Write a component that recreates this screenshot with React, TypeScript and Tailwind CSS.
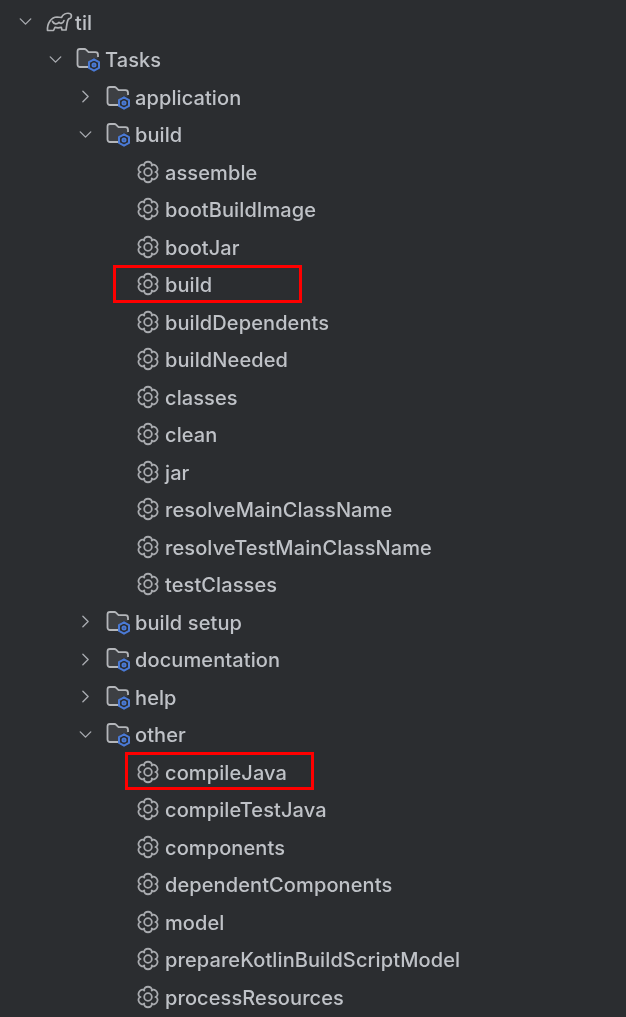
import { ChevronDown, ChevronRight } from 'lucide-react'

type Row = {
  label: string
  depth: 0 | 1 | 2 | 3
  kind: 'project' | 'folder' | 'task'
  open?: boolean
  marker?: 'build' | 'compile'
}

const rows: Row[] = [
  { label: 'til', depth: 0, kind: 'project', open: true },
  { label: 'Tasks', depth: 1, kind: 'folder', open: true },
  { label: 'application', depth: 2, kind: 'folder' },
  { label: 'build', depth: 2, kind: 'folder', open: true },
  { label: 'assemble', depth: 3, kind: 'task' },
  { label: 'bootBuildImage', depth: 3, kind: 'task' },
  { label: 'bootJar', depth: 3, kind: 'task' },
  { label: 'build', depth: 3, kind: 'task', marker: 'build' },
  { label: 'buildDependents', depth: 3, kind: 'task' },
  { label: 'buildNeeded', depth: 3, kind: 'task' },
  { label: 'classes', depth: 3, kind: 'task' },
  { label: 'clean', depth: 3, kind: 'task' },
  { label: 'jar', depth: 3, kind: 'task' },
  { label: 'resolveMainClassName', depth: 3, kind: 'task' },
  { label: 'resolveTestMainClassName', depth: 3, kind: 'task' },
  { label: 'testClasses', depth: 3, kind: 'task' },
  { label: 'build setup', depth: 2, kind: 'folder' },
  { label: 'documentation', depth: 2, kind: 'folder' },
  { label: 'help', depth: 2, kind: 'folder' },
  { label: 'other', depth: 2, kind: 'folder', open: true },
  { label: 'compileJava', depth: 3, kind: 'task', marker: 'compile' },
  { label: 'compileTestJava', depth: 3, kind: 'task' },
  { label: 'components', depth: 3, kind: 'task' },
  { label: 'dependentComponents', depth: 3, kind: 'task' },
  { label: 'model', depth: 3, kind: 'task' },
  { label: 'prepareKotlinBuildScriptModel', depth: 3, kind: 'task' },
  { label: 'processResources', depth: 3, kind: 'task' },
]

const indent = ['pl-[14px]', 'pl-[44px]', 'pl-[74px]', 'pl-[104px]']

// six rounded lobes around the centre, in a 24 box
function gearPath(tip: number, valley: number) {
  const pt = (deg: number, r: number) => {
    const a = (deg * Math.PI) / 180
    return `${(12 + r * Math.cos(a)).toFixed(2)} ${(12 + r * Math.sin(a)).toFixed(2)}`
  }
  let d = `M${pt(-120, valley)}`
  for (let i = 0; i < 6; i++) {
    const c = -90 + i * 60
    d += ` C${pt(c - 24, tip + 2.2)} ${pt(c + 24, tip + 2.2)} ${pt(c + 30, valley)}`
  }
  return d + 'Z'
}

const gear = gearPath(10.4, 7.4)

function GearIcon({ size, color, stroke }: { size: number; color: string; stroke: number }) {
  return (
    <svg width={size} height={size} viewBox="0 0 24 24" fill="none" stroke={color} strokeWidth={stroke} strokeLinejoin="round">
      <path d={gear} />
      <circle cx="12" cy="12" r="3.800" />
    </svg>
  )
}

function ElephantIcon() {
  return (
    <svg width="27" height="20" viewBox="0 0 27 20" fill="none" stroke="#b0b2b5" strokeWidth="1.700" strokeLinejoin="round" strokeLinecap="round">
      <path d="M1.500 18.500C1 11 5.500 5 11 5L15.500 5.500C17 2.500 20.500 .8 23.500 1.500C26.300 2.200 25.800 6.300 23.200 6.600C21.800 7 21.500 9 21 11.500L20 18H16L15.300 15.300C13 16 11 16 9 15.300L7.500 18.500H1.500Z" />
      <path d="M6.500 9.500C8 12.500 11 12.500 13 10.300C14.500 12 17 11.500 18 8.500" />
    </svg>
  )
}

function FolderIcon() {
  return (
    <span className="relative block w-[25px] h-[24px]">
      <svg width="25" height="24" viewBox="0 0 25 24" fill="none" className="absolute left-0 top-0">
        <path
          d="M13 20H4A2.500 2.500 0 0 1 1.500 17.500V4.500A2.500 2.500 0 0 1 4 2H8.500C9.100 2 9.600 2.200 10 2.600L12 4.600C12.400 5 12.900 5.200 13.500 5.200H19.500A2.500 2.500 0 0 1 22 7.700V11.500H16L13 15V20Z"
          fill="#3d3f43"
        />
        <path
          d="M12.500 20H4A2.500 2.500 0 0 1 1.500 17.500V4.500A2.500 2.500 0 0 1 4 2H8.500C9.100 2 9.600 2.200 10 2.600L12 4.600C12.400 5 12.900 5.200 13.500 5.200H19.500A2.500 2.500 0 0 1 22 7.700V10"
          stroke="#b4b6ba"
          strokeWidth="1.800"
        />
      </svg>
      <svg width="14" height="14" viewBox="0 0 14 14" fill="none" stroke="#4a7ad6" strokeWidth="2" strokeLinejoin="round" className="absolute left-[11px] top-[11px]">
        <path d="M7 1.300L12 4.100V9.900L7 12.700L2 9.900V4.100Z" />
        <circle cx="7" cy="7" r="1.500" />
      </svg>
    </span>
  )
}

function TreeRow({ row }: { row: Row }) {
  return (
    <div className={`relative flex items-center h-[37.5px] ${indent[row.depth]}`}>
      <span className="w-[22px] flex justify-center text-[#a8abb0]">
        {row.kind !== 'task' && (row.open ? <ChevronDown size={21} strokeWidth={1.6} /> : <ChevronRight size={21} strokeWidth={1.6} />)}
      </span>
      <span className="ml-[10px] w-[29px] flex-shrink-0 blur-[0.3px]">
        {row.kind === 'project' && <ElephantIcon />}
        {row.kind === 'folder' && <FolderIcon />}
        {row.kind === 'task' && <GearIcon size={24} color="#a9abaf" stroke={1.800} />}
      </span>
      <span className="text-[20px] font-medium tracking-[0.1px] text-[#bfc2c7] whitespace-nowrap translate-y-[0.5px] blur-[0.3px]">{row.label}</span>
      {row.marker === 'build' && <div className="absolute left-[113px] top-[-1px] w-[189px] h-[38px] border-[3px] border-[#ff0000]" />}
      {row.marker === 'compile' && <div className="absolute left-[125px] top-[-1px] w-[189px] h-[38px] border-[3px] border-[#ff0000]" />}
    </div>
  )
}

export default function App() {
  return (
    <div className="w-[626px] h-[1017px] overflow-hidden bg-[#2b2d30] pt-[3px] font-['Inter',sans-serif]">
      {rows.map((row, i) => (
        <TreeRow key={i} row={row} />
      ))}
    </div>
  )
}
